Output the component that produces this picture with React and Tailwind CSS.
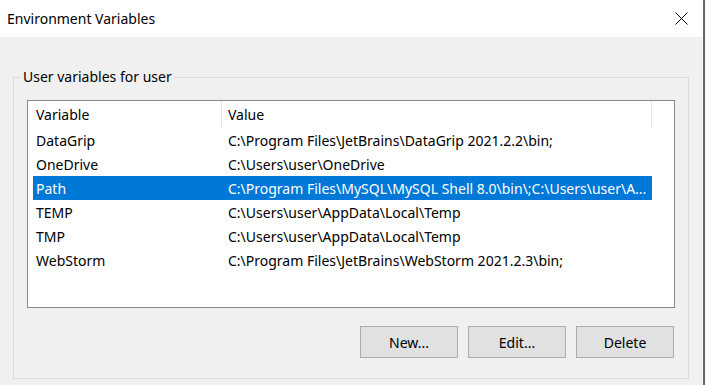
import React from "react";

const ROWS = [
  { name: "DataGrip", value: "C:\\Program Files\\JetBrains\\DataGrip 2021.2.2\\bin;" },
  { name: "OneDrive", value: "C:\\Users\\user\\OneDrive" },
  { name: "Path", value: "C:\\Program Files\\MySQL\\MySQL Shell 8.0\\bin\\;C:\\Users\\user\\A...", selected: true },
  { name: "TEMP", value: "C:\\Users\\user\\AppData\\Local\\Temp" },
  { name: "TMP", value: "C:\\Users\\user\\AppData\\Local\\Temp" },
  { name: "WebStorm", value: "C:\\Program Files\\JetBrains\\WebStorm 2021.2.3\\bin;" },
];

function WinButton({ children }) {
  return (
    <button className="w-[98px] h-[32px] bg-[#e1e1e1] border border-[#adadad] text-[14px] text-black">
      {children}
    </button>
  );
}

export default function App() {
  return (
    <div
      className="w-[706px] h-[385px] flex bg-[#f0f0f0] overflow-hidden"
      style={{ fontFamily: '"Noto Sans", "Open Sans", sans-serif' }}
    >
      <div className="w-[703px] flex flex-col">
        <div className="h-[37px] shrink-0 bg-white flex items-center justify-between pl-[7px] pr-[15px]">
          <span className="text-[14px] text-black">Environment Variables</span>
          <svg width="13" height="13" viewBox="0 0 13 13" className="text-black">
            <path d="M0.5 0.5 L12.5 12.5 M12.5 0.5 L0.5 12.5" stroke="currentColor" strokeWidth="1" />
          </svg>
        </div>

        <div className="flex-1 pt-[40px] pl-[13px] pr-[14px]">
          <div className="relative h-[302px] border border-[#dcdcdc] pt-[22px] pl-[13px] pr-[13px]">
            <span className="absolute -top-[11px] left-[7px] px-[2px] bg-[#f0f0f0] text-[14px] leading-[20px] text-black">
              User variables for user
            </span>

            <div className="h-[208px] bg-white border border-[#828790] pl-[5px] text-[14px] text-black">
              <div className="flex h-[27px] items-center">
                <div className="w-[189px] pl-[3px] self-stretch flex items-center border-r border-[#e5e5e5]">Variable</div>
                <div className="w-[430px] pl-[6px] self-stretch flex items-center border-r border-[#e5e5e5]">Value</div>
              </div>
              {ROWS.map((r) => (
                <div
                  key={r.name}
                  className={`flex h-[24px] w-[619px] items-center ${r.selected ? "bg-[#0078d7] text-white" : ""}`}
                >
                  <div className="w-[190px] pl-[3px] whitespace-nowrap">{r.name}</div>
                  <div className="flex-1 pl-[5px] whitespace-nowrap overflow-hidden">{r.value}</div>
                </div>
              ))}
            </div>

            <div className="flex justify-end gap-[10px] pt-[18px] pr-[1px]">
              <WinButton>New...</WinButton>
              <WinButton>Edit...</WinButton>
              <WinButton>Delete</WinButton>
            </div>
          </div>
        </div>
      </div>
      <div className="w-[2px] bg-[#6b6b6b]" />
      <div className="w-[1px] bg-[#f0f0f0]" />
    </div>
  );
}
